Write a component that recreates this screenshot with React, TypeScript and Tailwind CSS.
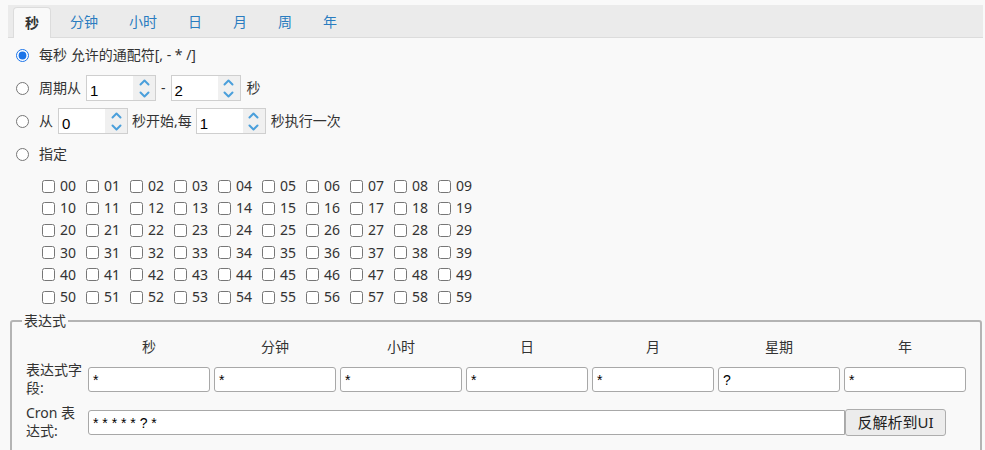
import React from 'react';

const tabs = ['秒', '分钟', '小时', '日', '月', '周', '年'];
const fields = ['*', '*', '*', '*', '*', '?', '*'];
const heads = ['秒', '分钟', '小时', '日', '月', '星期', '年'];

// Little up/down chevrons of the number box
const Chevron = ({ up }: { up?: boolean }) => (
    <svg width="11" height="7" viewBox="0 0 11 7">
        <path
            d={up ? 'M1.5 5.5 L5.5 1.5 L9.5 5.5' : 'M1.5 1.5 L5.5 5.5 L9.5 1.5'}
            fill="none"
            stroke="#4a9fdb"
            strokeWidth="2"
            strokeLinecap="round"
            strokeLinejoin="round"
        />
    </svg>
);

const Spin = ({ value }: { value: string }) => (
    <div className="flex h-[26px] w-[70px] border border-[#cfcfcf] bg-white">
        <div className="flex-1 pl-[3px] pt-[6px] font-['Liberation_Sans',sans-serif] text-[15px] leading-[18px] text-black">
            {value}
        </div>
        <div className="flex w-[22px] flex-col items-center justify-center gap-[5px] bg-[#f0f0f0]">
            <Chevron up />
            <Chevron />
        </div>
    </div>
);

const Radio = ({ checked }: { checked?: boolean }) => (
    <input
        type="radio"
        name="mode"
        defaultChecked={checked}
        className="m-0 h-[13px] w-[13px] shrink-0 accent-[#1a73e8]"
    />
);

const App = () => {
    const rows = Array.from({ length: 6 }, (_, r) =>
        Array.from({ length: 10 }, (_, c) => String(r * 10 + c).padStart(2, '0')),
    );

    return (
        <div className="h-[450px] overflow-hidden bg-[#f9f9f9] pt-[5px] font-['Noto_Sans','Noto_Sans_CJK_SC',sans-serif] text-[14px] text-[#333]">
            {/* Tabs */}
            <div className="ml-[8px] mr-[2px] flex h-[33px] items-end gap-[7px] border-b border-[#dcdcdc] bg-[#ebebeb] pl-[5px]">
                {tabs.map((t, i) => (
                    <div
                        key={t}
                        className={
                            i === 0
                                ? 'relative -mb-px flex h-[31px] items-center rounded-t-[4px] border border-b-0 border-[#dcdcdc] bg-[#f9f9f9] px-[11px] font-bold leading-none text-[#333]'
                                : 'flex h-[30px] items-center px-[12px] leading-none text-[#2a7cc0]'
                        }
                    >
                        {t}
                    </div>
                ))}
            </div>

            {/* Modes */}
            <div className="flex flex-col gap-[7px] pl-[16px] pt-[4px] leading-[18px]">
                <div className="flex h-[26px] items-center">
                    <Radio checked />
                    <span className="ml-[10px]">每秒 允许的通配符[, - * /]</span>
                </div>
                <div className="flex h-[26px] items-center">
                    <Radio />
                    <span className="ml-[10px]">周期从</span>
                    <div className="ml-[5px]">
                        <Spin value="1" />
                    </div>
                    <span className="mx-[5px]">-</span>
                    <Spin value="2" />
                    <span className="ml-[6px]">秒</span>
                </div>
                <div className="flex h-[26px] items-center">
                    <Radio />
                    <span className="ml-[10px]">从</span>
                    <div className="ml-[5px]">
                        <Spin value="0" />
                    </div>
                    <span className="ml-[4px] mr-[4px]">秒开始,每</span>
                    <Spin value="1" />
                    <span className="ml-[5px]">秒执行一次</span>
                </div>
                <div className="flex h-[26px] items-center">
                    <Radio />
                    <span className="ml-[10px]">指定</span>
                </div>
            </div>

            {/* Specific seconds */}
            <div className="mt-[8px] flex flex-col pl-[42px]">
                {rows.map((row, r) => (
                    <div key={r} className="flex h-[22.2px] items-center">
                        {row.map((n) => (
                            <label key={n} className="flex w-[44px] items-center">
                                <input type="checkbox" className="m-0 h-[13px] w-[13px]" />
                                <span className="ml-[5px] leading-[18px]">{n}</span>
                            </label>
                        ))}
                    </div>
                ))}
            </div>

            {/* Expression */}
            <fieldset className="ml-[10px] mr-[3px] mt-[4px] rounded-[3px] border-2 border-[#b4b4b4] px-[10px] pb-[30px]">
                <legend className="px-[2px] leading-[18px]">表达式</legend>
                <div className="mt-[5px] grid grid-cols-[66px_repeat(7,126px)] items-center">
                    <div className="h-[24px]" />
                    {heads.map((h) => (
                        <div key={h} className="h-[24px] pr-[4px] text-center leading-[24px]">
                            {h}
                        </div>
                    ))}

                    <div className="mt-[2px] w-[60px] pl-[4px] leading-[18px]">表达式字段:</div>
                    {fields.map((f, i) => (
                        <div key={i} className="mt-[2px] pr-[4px]">
                            <div className="h-[25px] rounded-[3px] border border-[#a8a8a8] bg-white pl-[4px] pt-[3px] font-['Liberation_Sans',sans-serif] text-[14px] leading-[18px] text-black">
                                {f}
                            </div>
                        </div>
                    ))}

                    <div className="mt-[7px] w-[60px] pl-[4px] leading-[18px]">Cron 表达式:</div>
                    <div className="col-span-7 mt-[7px] flex items-center">
                        <div className="h-[25px] w-[757px] rounded-l-[3px] border border-[#a8a8a8] bg-white pl-[4px] pt-[3px] font-['Liberation_Sans',sans-serif] text-[14px] leading-[18px] text-black">
                            * * * * * ? *
                        </div>
                        <button className="h-[27px] w-[101px] rounded-[3px] border border-[#adadad] bg-[#ececec] text-[15px] leading-none text-[#222]">
                            反解析到UI
                        </button>
                    </div>
                </div>
            </fieldset>
        </div>
    );
};

export default App;
